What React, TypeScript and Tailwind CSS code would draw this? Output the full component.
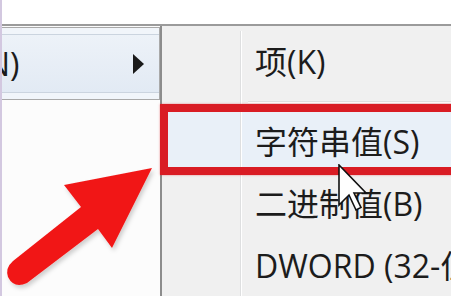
import React from "react";

const font = { fontFamily: '"Open Sans", "Noto Sans CJK SC", sans-serif' };

interface Item {
  label: string;
  active?: boolean;
}

const items: (Item | "sep")[] = [
  { label: "项(K)" },
  "sep",
  { label: "字符串值(S)", active: true },
  { label: "二进制值(B)" },
  { label: "DWORD (32-位)值(D)" },
];

function MenuRow({ item }: { item: Item }) {
  return (
    <div className={`flex h-[62px] shrink-0 ${item.active ? "bg-[#e9f0f8]" : ""}`}>
      <div className="w-[79px] shrink-0 border-r border-[#dedfe0]" />
      <div className="w-px shrink-0 bg-white" />
      <div className="flex items-center pl-[13px] whitespace-nowrap text-[32px] leading-none text-[#1c1c1c]">
        {item.label}
      </div>
    </div>
  );
}

export default function App() {
  return (
    <div
      className="relative w-[451px] h-[296px] overflow-hidden bg-white border-l-2 border-[#d3c8e0]"
      style={font}
    >
      {/* Top strip */}
      <div className="h-[24px] bg-white" />

      <div className="flex h-[272px] border-t-2 border-[#9b9b9b]">
        {/* Parent menu */}
        <div className="w-[158px] shrink-0 bg-[#fcfcfc] pt-[1px]">
          <div className="h-[73px] border-y border-r border-[#a9a9a9] bg-[#f1f5fa] py-[6px]">
            <div className="flex h-full items-center border-y border-[#cbd4df] bg-gradient-to-b from-[#edf2f8] to-[#e2eaf4] pr-[15px]">
              <span className="-ml-[16px] text-[32px] leading-none text-[#1c1c1c] whitespace-nowrap">
                N)
              </span>
              <svg className="ml-auto" width="11" height="20" viewBox="0 0 11 20">
                <polygon points="0,0 11,10 0,20" fill="#1a1a1a" />
              </svg>
            </div>
          </div>
        </div>

        {/* Sub menu */}
        <div className="flex-1 border-l-2 border-[#8c8c8c] bg-[#f0f0f0] pt-[5px] flex flex-col">
          {items.map((it, i) =>
            it === "sep" ? (
              <div key={i} className="flex h-[18px] shrink-0">
                <div className="w-[79px] shrink-0 border-r border-[#dedfe0]" />
                <div className="w-px shrink-0 bg-white" />
                <div className="flex-1 pl-[6px] flex flex-col justify-center">
                  <div className="h-px bg-[#e0e0e0]" />
                  <div className="h-px bg-white" />
                </div>
              </div>
            ) : (
              <MenuRow key={i} item={it} />
            )
          )}
        </div>
      </div>

      {/* Red highlight box */}
      <div className="absolute left-[158px] top-[104px] w-[310px] h-[71px] border-[8px] border-[#d91c24] shadow-[0_0_2px_rgba(217,28,36,0.5)]" />

      {/* Red arrow */}
      <svg className="absolute left-0 top-0" width="451" height="296" viewBox="0 0 451 296">
        <defs>
          <filter id="sh" x="-10%" y="-10%" width="130%" height="130%">
            <feDropShadow dx="2" dy="3" stdDeviation="2" floodColor="#000" floodOpacity="0.18" />
          </filter>
        </defs>
        <path
          d="M150,168 L62,185 L79,207 L11,261 Q3,268 6,277 Q12,289 25,283 L96,229 L110,248 Z"
          fill="#f11919"
          filter="url(#sh)"
        />
      </svg>

      {/* Mouse cursor */}
      <svg className="absolute left-[336px] top-[164px]" width="30" height="48" viewBox="0 0 30 48">
        <polygon
          points="1,1 1,41 11,31 18,46 23,43.5 16,29 28,29"
          fill="#ffffff"
          stroke="#111"
          strokeWidth="1.6"
          strokeLinejoin="miter"
        />
      </svg>
    </div>
  );
}
